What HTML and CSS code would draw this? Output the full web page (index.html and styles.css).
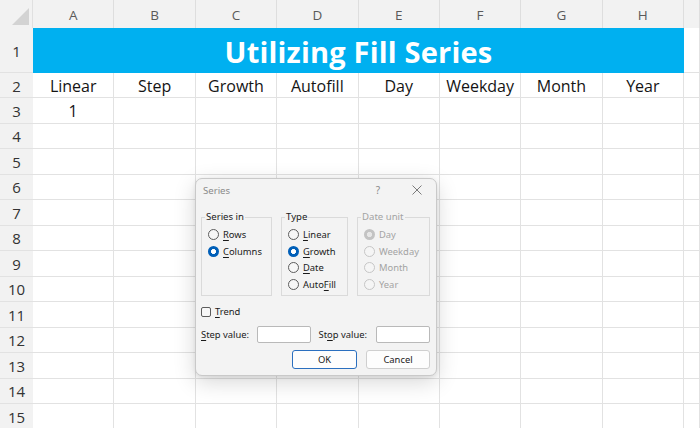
FILE: index.html
```html
<!DOCTYPE html>
<html>
<head>
<meta charset="utf-8">
<link rel="stylesheet" href="styles.css">
</head>
<body>
<div class="sheet">
  <div class="row hdr">
    <div class="corner"><svg width="33" height="28" viewBox="0 0 33 28"><polygon points="29,8 29,25 12,25" fill="#d3d3d3"/></svg></div>
    <div class="ch">A</div><div class="ch">B</div><div class="ch">C</div><div class="ch">D</div><div class="ch">E</div><div class="ch">F</div><div class="ch">G</div><div class="ch">H</div><div class="ch"></div>
  </div>
  <div class="row r1">
    <div class="rh">1</div>
    <div class="title">Utilizing Fill Series</div>
    <div class="c"></div>
  </div>
  <div class="row r2">
    <div class="rh">2</div>
    <div class="c">Linear</div><div class="c">Step</div><div class="c">Growth</div><div class="c">Autofill</div><div class="c">Day</div><div class="c">Weekday</div><div class="c">Month</div><div class="c">Year</div><div class="c"></div>
  </div>
  <div class="row">
    <div class="rh">3</div>
    <div class="c">1</div><div class="c"></div><div class="c"></div><div class="c"></div><div class="c"></div><div class="c"></div><div class="c"></div><div class="c"></div><div class="c"></div>
  </div>
  <div class="row"><div class="rh">4</div><div class="c"></div><div class="c"></div><div class="c"></div><div class="c"></div><div class="c"></div><div class="c"></div><div class="c"></div><div class="c"></div><div class="c"></div></div>
  <div class="row"><div class="rh">5</div><div class="c"></div><div class="c"></div><div class="c"></div><div class="c"></div><div class="c"></div><div class="c"></div><div class="c"></div><div class="c"></div><div class="c"></div></div>
  <div class="row"><div class="rh">6</div><div class="c"></div><div class="c"></div><div class="c"></div><div class="c"></div><div class="c"></div><div class="c"></div><div class="c"></div><div class="c"></div><div class="c"></div></div>
  <div class="row"><div class="rh">7</div><div class="c"></div><div class="c"></div><div class="c"></div><div class="c"></div><div class="c"></div><div class="c"></div><div class="c"></div><div class="c"></div><div class="c"></div></div>
  <div class="row"><div class="rh">8</div><div class="c"></div><div class="c"></div><div class="c"></div><div class="c"></div><div class="c"></div><div class="c"></div><div class="c"></div><div class="c"></div><div class="c"></div></div>
  <div class="row"><div class="rh">9</div><div class="c"></div><div class="c"></div><div class="c"></div><div class="c"></div><div class="c"></div><div class="c"></div><div class="c"></div><div class="c"></div><div class="c"></div></div>
  <div class="row"><div class="rh">10</div><div class="c"></div><div class="c"></div><div class="c"></div><div class="c"></div><div class="c"></div><div class="c"></div><div class="c"></div><div class="c"></div><div class="c"></div></div>
  <div class="row"><div class="rh">11</div><div class="c"></div><div class="c"></div><div class="c"></div><div class="c"></div><div class="c"></div><div class="c"></div><div class="c"></div><div class="c"></div><div class="c"></div></div>
  <div class="row"><div class="rh">12</div><div class="c"></div><div class="c"></div><div class="c"></div><div class="c"></div><div class="c"></div><div class="c"></div><div class="c"></div><div class="c"></div><div class="c"></div></div>
  <div class="row"><div class="rh">13</div><div class="c"></div><div class="c"></div><div class="c"></div><div class="c"></div><div class="c"></div><div class="c"></div><div class="c"></div><div class="c"></div><div class="c"></div></div>
  <div class="row"><div class="rh">14</div><div class="c"></div><div class="c"></div><div class="c"></div><div class="c"></div><div class="c"></div><div class="c"></div><div class="c"></div><div class="c"></div><div class="c"></div></div>
  <div class="row"><div class="rh">15</div><div class="c"></div><div class="c"></div><div class="c"></div><div class="c"></div><div class="c"></div><div class="c"></div><div class="c"></div><div class="c"></div><div class="c"></div></div>

  <div class="dialog">
    <div class="dtitle">
      <span class="dname">Series</span>
      <span class="dq">?</span>
      <span class="dx"><svg width="10" height="10" viewBox="0 0 10 10"><path d="M0.5 0.5 L9.5 9.5 M9.5 0.5 L0.5 9.5" stroke="#7a7a7a" stroke-width="1" fill="none"/></svg></span>
    </div>
    <div class="groups">
      <fieldset class="grp g1">
        <legend>Series in</legend>
        <div class="opt"><span class="radio"></span><span><u>R</u>ows</span></div>
        <div class="opt"><span class="radio on"></span><span><u>C</u>olumns</span></div>
      </fieldset>
      <fieldset class="grp g2">
        <legend>Type</legend>
        <div class="opt"><span class="radio"></span><span><u>L</u>inear</span></div>
        <div class="opt"><span class="radio on"></span><span><u>G</u>rowth</span></div>
        <div class="opt"><span class="radio"></span><span><u>D</u>ate</span></div>
        <div class="opt"><span class="radio"></span><span>Auto<u>F</u>ill</span></div>
      </fieldset>
      <fieldset class="grp g3 off">
        <legend>Date unit</legend>
        <div class="opt"><span class="radio on"></span><span>Day</span></div>
        <div class="opt"><span class="radio"></span><span>Weekday</span></div>
        <div class="opt"><span class="radio"></span><span>Month</span></div>
        <div class="opt"><span class="radio"></span><span>Year</span></div>
      </fieldset>
    </div>
    <div class="trend"><span class="check"></span><span><u>T</u>rend</span></div>
    <div class="values">
      <span class="lbl"><u>S</u>tep value:</span><span class="input"></span>
      <span class="lbl lbl2">St<u>o</u>p value:</span><span class="input"></span>
    </div>
    <div class="buttons">
      <span class="btn ok">OK</span>
      <span class="btn">Cancel</span>
    </div>
  </div>
</div>
</body>
</html>
```

FILE: styles.css
```css
html, body {
  margin: 0;
  padding: 0;
  background: #ffffff;
}
.sheet {
  position: relative;
  width: 700px;
  height: 428px;
  overflow: hidden;
  font-family: "Open Sans", "Noto Sans", sans-serif;
}
.row {
  display: grid;
  grid-template-columns: 33px repeat(8, 81.375px) 1fr;
  height: 25.5px;
  box-sizing: border-box;
}
.row.hdr { height: 28px; background: #f2f2f2; }
.row.r1 { height: 45px; grid-template-columns: 33px 651px 1fr; }
.row.r2 { height: 25px; }
.corner {
  background: #f2f2f2;
  border-right: 1px solid #e0e0e0;
  box-sizing: border-box;
}
.corner svg { display: block; }
.ch {
  display: flex;
  align-items: center;
  justify-content: center;
  font-size: 13.5px;
  color: #5a5a5a;
  border-right: 1px solid #dedede;
  box-sizing: border-box;
  padding-top: 1px;
}
.rh {
  background: #f2f2f2;
  display: flex;
  align-items: center;
  justify-content: center;
  font-size: 15px;
  color: #333333;
  border-bottom: 1px solid #e2e2e2;
  box-sizing: border-box;
  padding-top: 1px;
}
.c {
  border-right: 1px solid #e2e2e2;
  border-bottom: 1px solid #e2e2e2;
  box-sizing: border-box;
  display: flex;
  align-items: center;
  justify-content: center;
  font-size: 16px;
  color: #141414;
  padding-top: 1px;
}
.title {
  background: #00b0f0;
  color: #ffffff;
  font-weight: 700;
  font-size: 29px;
  display: flex;
  align-items: center;
  justify-content: center;
  padding-top: 1px;
  letter-spacing: 0.2px;
}

/* dialog */
.dialog {
  position: absolute;
  left: 195px;
  top: 178px;
  width: 242px;
  height: 198px;
  box-sizing: border-box;
  background: #f3f3f3;
  border: 1px solid #c9c9c9;
  border-radius: 7px;
  box-shadow: 0 6px 22px rgba(0,0,0,0.16), 0 1px 4px rgba(0,0,0,0.08);
  font-family: "Noto Sans", "Open Sans", sans-serif;
  font-size: 9.4px;
  color: #1a1a1a;
  padding: 0 6px 0 5px;
}
.dtitle {
  height: 22px;
  display: flex;
  align-items: center;
  margin: 0 -6px 0 -5px;
  padding: 0 0 0 7px;
}
.dname {
  flex: 1;
  color: #8a8a8a;
  font-size: 9.6px;
}
.dq {
  color: #8a8a8a;
  font-size: 10px;
  width: 14px;
  text-align: center;
  margin-right: 1px;
}
.dx {
  width: 14px;
  margin: 0 12px 0 24px;
  display: flex;
  align-items: center;
  justify-content: center;
}
.groups {
  display: flex;
  gap: 9px;
  margin-top: 10px;
}
.grp {
  margin: 0;
  padding: 3px 4px 1px 6px;
  border: 1px solid #dadada;
  min-width: 0;
  box-sizing: border-box;
  height: 85px;
}
.g1 { width: 71px; }
.g2 { width: 67px; }
.g3 { width: 73px; }
legend {
  padding: 0 1px;
  margin-left: -3px;
  line-height: 12px;
  font-size: 9.6px;
}
.opt {
  display: flex;
  align-items: center;
  gap: 4px;
  height: 16.7px;
  white-space: nowrap;
}
u { text-decoration-thickness: 1px; text-underline-offset: 1.5px; }
.radio {
  width: 11px;
  height: 11px;
  box-sizing: border-box;
  border-radius: 50%;
  border: 1px solid #5c5c5c;
  background: #f7f7f7;
  flex: none;
}
.radio.on {
  border: none;
  background: radial-gradient(circle, #ffffff 0 2.2px, #005fb8 2.7px);
}
.off { color: #a3a3a3; }
.off .radio { border-color: #c6c6c6; background: #f5f5f5; }
.off .radio.on {
  border: none;
  background: radial-gradient(circle, #e6e6e6 0 2.4px, #c3c3c3 2.9px);
}
.trend {
  display: flex;
  align-items: center;
  gap: 4px;
  margin-top: 10px;
  height: 11px;
}
.check {
  width: 10px;
  height: 10px;
  box-sizing: border-box;
  border: 1px solid #5c5c5c;
  border-radius: 2px;
  background: #f7f7f7;
}
.values {
  display: flex;
  align-items: center;
  margin-top: 9px;
  height: 17px;
}
.lbl { width: 56px; white-space: nowrap; }
.lbl2 { width: 58px; margin-left: 8px; }
.input {
  width: 54px;
  height: 17px;
  box-sizing: border-box;
  background: #ffffff;
  border: 1px solid #b9b9b9;
  border-radius: 2px;
}
.buttons {
  display: flex;
  justify-content: flex-end;
  gap: 9px;
  margin-top: 7px;
}
.btn {
  width: 64px;
  height: 19px;
  box-sizing: border-box;
  border: 1px solid #cfcfcf;
  border-radius: 3px;
  background: #fdfdfd;
  display: flex;
  align-items: center;
  justify-content: center;
  font-size: 9.4px;
}
.btn.ok {
  width: 65px;
  border: 1.5px solid #2a6fbf;
}
```
